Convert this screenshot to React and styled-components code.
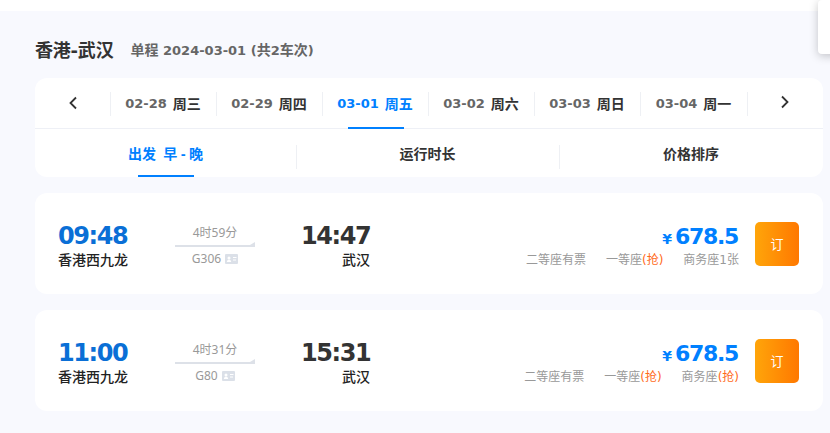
import React from 'react'
import styled, { createGlobalStyle } from 'styled-components'

const Global = createGlobalStyle`
html,body{margin:0;padding:0;background:#fff;}
body{font-family:"DejaVu Sans","Noto Sans CJK SC",sans-serif;width:830px;height:433px;overflow:hidden;}
`
const Page = styled.div`
position:relative;
margin-top:11px;
height:422px;
background:#f8f9fe;
padding:0 7px 0 35px;
box-sizing:border-box;
`
const Popup = styled.div`
position:absolute;
top:-11px;
left:818px;
width:40px;
height:54px;
background:#fff;
border-radius:4px;
box-shadow:0 2px 10px rgba(0,0,0,0.22);
`
const Header = styled.div`
display:flex;
align-items:center;
height:67px;
padding-top:9px;
box-sizing:border-box;
`
const Title = styled.h1`
margin:0 17px 0 0;
font-size:18px;
font-weight:700;
color:#333;
letter-spacing:-0.2px;
`
const Sub = styled.span`
font-size:13px;
font-weight:700;
color:#666;
`
const Han = styled.span`
font-size:14px;
`
const Panel = styled.div`
background:#fff;
border-radius:12px;
height:99px;
overflow:hidden;
`
const DateRow = styled.div`
display:grid;
grid-template-columns:75px repeat(5,106px) 107px 1fr;
height:50px;
border-bottom:1px solid #eef0f6;
box-sizing:content-box;
`
const Arrow = styled.div`
display:flex;
align-items:center;
justify-content:center;
padding-bottom:${p => p.$low ? '0' : '2px'};
color:#333;
`
const DateCell = styled.div`
position:relative;
display:flex;
align-items:center;
justify-content:center;
gap:6px;
font-size:13px;
font-weight:700;
color:${p => p.$active ? '#0080ff' : '#666'};
&::before{
  content:'';
  position:absolute;
  left:0;
  top:14px;
  height:24px;
  width:1px;
  background:#eef0f4;
}
&::after{
  content:'';
  display:${p => p.$active ? 'block' : 'none'};
  position:absolute;
  left:26px;
  bottom:-1px;
  width:56px;
  height:2px;
  background:#0080ff;
}
`
const LastCell = styled(Arrow)`
position:relative;
&::before{
  content:'';
  position:absolute;
  left:0;
  top:14px;
  height:24px;
  width:1px;
  background:#eef0f4;
}
`
const Week = styled.span`
color:${p => p.$active ? '#0080ff' : '#333'};
font-size:14px;
`
const SortRow = styled.div`
display:grid;
grid-template-columns:261px 263px 1fr;
height:48px;
`
const SortCell = styled.div`
position:relative;
display:flex;
align-items:center;
justify-content:center;
font-family:"Noto Sans","Noto Sans CJK SC",sans-serif;
font-size:14px;
font-weight:700;
white-space:pre;
box-sizing:border-box;
color:${p => p.$active ? '#0080ff' : '#333'};
&::before{
  content:'';
  display:${p => p.$first ? 'none' : 'block'};
  position:absolute;
  left:0;
  top:16px;
  height:24px;
  width:1px;
  background:#eef0f4;
}
&::after{
  content:'';
  display:${p => p.$active ? 'block' : 'none'};
  position:absolute;
  left:103px;
  bottom:0;
  width:56px;
  height:2px;
  background:#0080ff;
}
`
const List = styled.div`
display:flex;
flex-direction:column;
gap:16px;
margin-top:16px;
`
const TrainCard = styled.div`
display:flex;
align-items:center;
height:101px;
background:#fff;
border-radius:12px;
padding:0 24px 0 23px;
box-sizing:border-box;
`
const Depart = styled.div`
width:71px;
padding-top:4px;
`
const Clock = styled.div`
font-size:24px;
line-height:30px;
font-weight:700;
letter-spacing:-1.4px;
white-space:nowrap;
color:${p => p.$blue ? '#0a6fd6' : '#333'};
`
const Station = styled.div`
font-size:14px;
line-height:19px;
font-weight:500;
color:#222;
white-space:nowrap;
`
const Rail = styled.div`
width:80px;
margin-left:46px;
padding-top:4px;
display:flex;
flex-direction:column;
align-items:center;
font-family:"Noto Sans","Noto Sans CJK SC",sans-serif;
font-size:12px;
line-height:16px;
color:#999;
`
const Line = styled.div`
position:relative;
align-self:stretch;
height:2px;
margin:4px 0;
background:#dde1e8;
&::after{
  content:'';
  position:absolute;
  right:0;
  top:-3px;
  border-left:5px solid transparent;
  border-bottom:3px solid #dde1e8;
}
`
const Code = styled.div`
display:flex;
align-items:center;
gap:4px;
`
const Arrive = styled.div`
margin-left:46px;
width:69px;
padding-top:4px;
text-align:right;
`
const Fare = styled.div`
margin-left:auto;
padding-top:6px;
display:flex;
flex-direction:column;
align-items:flex-end;
`
const Price = styled.div`
display:flex;
align-items:baseline;
gap:3px;
padding-right:1px;
font-size:22px;
line-height:24px;
font-weight:700;
letter-spacing:-1.3px;
color:#0080ff;
`
const Yen = styled.span`
font-size:14px;
letter-spacing:0;
`
const Seats = styled.div`
display:flex;
gap:20px;
font-size:12px;
line-height:18px;
color:#999;
white-space:nowrap;
`
const Grab = styled.span`
color:#ff6a1a;
`
const Book = styled.button`
margin-left:16px;
width:44px;
height:44px;
border:0;
border-radius:5px;
padding:0;
background:linear-gradient(90deg,#ffa50a,#ff7800);
color:#fff;
font-size:13px;
font-family:inherit;
`

const ChevLeft = () => (
  <svg width="12" height="14" viewBox="0 0 12 14" fill="none" stroke="#333" strokeWidth="1.8">
    <path d="M9 1.5 3.5 7 9 12.5" />
  </svg>
)
const ChevRight = () => (
  <svg width="12" height="14" viewBox="0 0 12 14" fill="none" stroke="#333" strokeWidth="1.8">
    <path d="M3 1.5 8.5 7 3 12.5" />
  </svg>
)
const IdTag = () => (
  <svg width="13" height="10" viewBox="0 0 13 10">
    <rect width="13" height="10" rx="1" fill="#dbe0e8" />
    <circle cx="4" cy="4" r="1.5" fill="#fff" />
    <path d="M1.8 8c.2-1.6 1-2.2 2.2-2.2S6 6.400 6.200 8z" fill="#fff" />
    <path d="M8 3.500h3.500M8 6h3" stroke="#fff" />
  </svg>
)

const dates = [
  ['02-28', '周三'],
  ['02-29', '周四'],
  ['03-01', '周五', true],
  ['03-02', '周六'],
  ['03-03', '周日'],
  ['03-04', '周一'],
]

const trains = [
  {
    from: '09:48', to: '14:47', span: '4时59分', code: 'G306',
    seats: [['二等座有票'], ['一等座', '(抢)'], ['商务座1张']],
  },
  {
    from: '11:00', to: '15:31', span: '4时31分', code: 'G80',
    seats: [['二等座有票'], ['一等座', '(抢)'], ['商务座', '(抢)']],
  },
]

export default function App() {
  return (
    <>
      <Global />
      <Page>
        <Popup />
        <Header>
          <Title>香港-武汉</Title>
          <Sub><Han>单程</Han> 2024-03-01 (<Han>共</Han>2<Han>车次</Han>)</Sub>
        </Header>
        <Panel>
          <DateRow>
            <Arrow $low><ChevLeft /></Arrow>
            {dates.map(d => (
              <DateCell key={d[0]} $active={d[2]}>
                {d[0]} <Week $active={d[2]}>{d[1]}</Week>
              </DateCell>
            ))}
            <LastCell><ChevRight /></LastCell>
          </DateRow>
          <SortRow>
            <SortCell $first $active>{'出发  早 - 晚'}</SortCell>
            <SortCell>运行时长</SortCell>
            <SortCell>价格排序</SortCell>
          </SortRow>
        </Panel>
        <List>
          {trains.map(t => (
            <TrainCard key={t.code}>
              <Depart>
                <Clock $blue>{t.from}</Clock>
                <Station>香港西九龙</Station>
              </Depart>
              <Rail>
                <span>{t.span}</span>
                <Line />
                <Code>{t.code} <IdTag /></Code>
              </Rail>
              <Arrive>
                <Clock>{t.to}</Clock>
                <Station>武汉</Station>
              </Arrive>
              <Fare>
                <Price><Yen>¥</Yen>678.5</Price>
                <Seats>
                  {t.seats.map(s => (
                    <span key={s[0]}>{s[0]}{s[1] && <Grab>{s[1]}</Grab>}</span>
                  ))}
                </Seats>
              </Fare>
              <Book>订</Book>
            </TrainCard>
          ))}
        </List>
      </Page>
    </>
  )
}
